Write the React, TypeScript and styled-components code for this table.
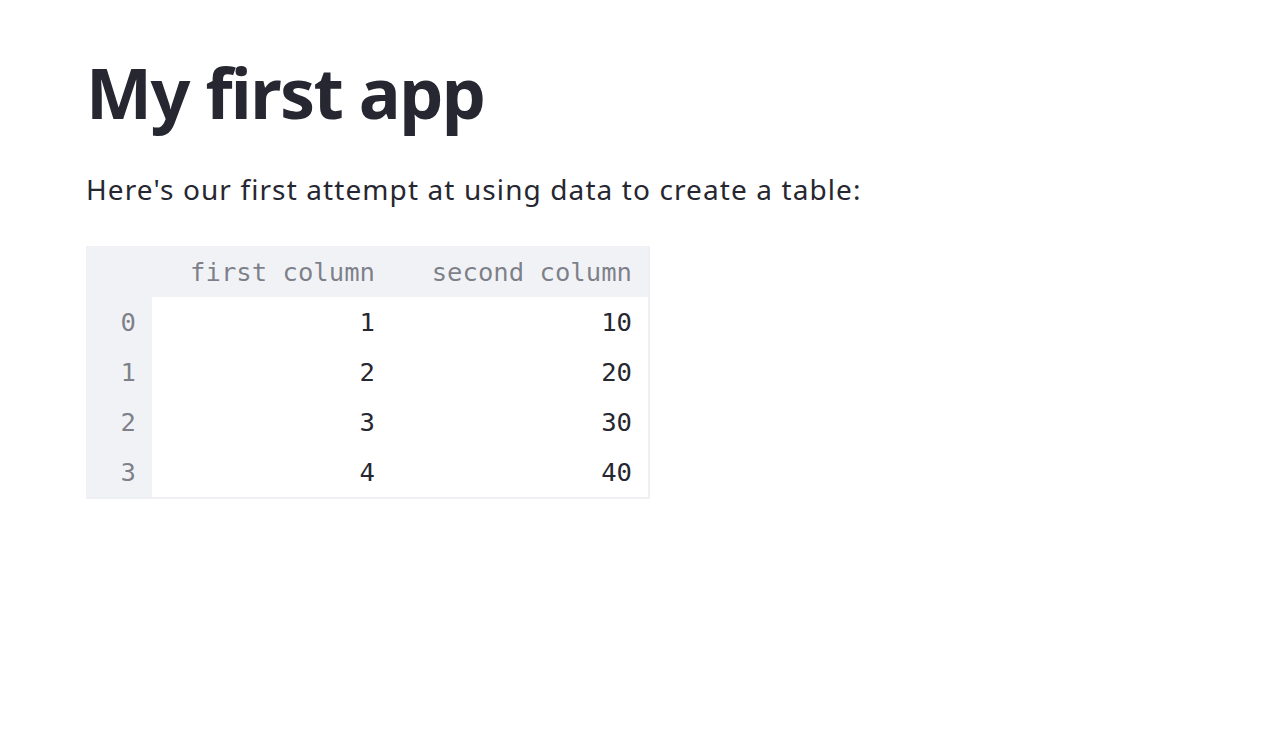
import React from "react";
import styled, { createGlobalStyle } from "styled-components";

const GlobalStyle = createGlobalStyle`
  html, body {
    margin: 0;
    padding: 0;
    background: #ffffff;
  }
  body {
    font-family: "Noto Sans", "Open Sans", sans-serif;
    color: #262730;
  }
`;

const Main = styled.main`
  display: flex;
  flex-direction: column;
  align-items: flex-start;
  padding: 50px 86px 0 86px;
`;

const Title = styled.h1`
  margin: 0;
  font-family: "Noto Sans", sans-serif;
  font-weight: 700;
  font-size: 70px;
  line-height: 84px;
  letter-spacing: -1.6px;
  color: #262730;
`;

const Lead = styled.p`
  margin: 34px 0 0 0;
  font-family: "Noto Sans", sans-serif;
  font-size: 28px;
  line-height: 42px;
  letter-spacing: 1.1px;
  color: #262730;
`;

const Table = styled.div`
  margin-top: 36px;
  display: grid;
  grid-template-columns: 66px 239px 257px;
  border-right: 2px solid #eef0f4;
  border-bottom: 2px solid #eef0f4;
  font-family: "DejaVu Sans Mono", "Liberation Mono", monospace;
  font-size: 25.6px;
`;

const Cell = styled.div<{ $head?: boolean; $index?: boolean; $tall?: boolean }>`
  height: ${(p) => (p.$tall ? 51 : 50)}px;
  display: flex;
  align-items: center;
  justify-content: flex-end;
  padding-right: 16px;
  background: ${(p) => (p.$head || p.$index ? "#f0f2f6" : "#ffffff")};
  color: ${(p) => (p.$head || p.$index ? "rgba(49, 51, 63, 0.6)" : "#262730")};
  white-space: nowrap;
`;

const columns = ["first column", "second column"];
const rows = [
  [1, 10],
  [2, 20],
  [3, 30],
  [4, 40],
];

export default function App() {
  return (
    <>
      <GlobalStyle />
      <Main>
        <Title>My first app</Title>
        <Lead>Here's our first attempt at using data to create a table:</Lead>
        <Table>
          <Cell $head $tall />
          {columns.map((c) => (
            <Cell key={c} $head $tall>
              {c}
            </Cell>
          ))}
          {rows.map((r, i) => (
            <React.Fragment key={i}>
              <Cell $index>{i}</Cell>
              {r.map((v, j) => (
                <Cell key={j}>{v}</Cell>
              ))}
            </React.Fragment>
          ))}
        </Table>
      </Main>
    </>
  );
}
